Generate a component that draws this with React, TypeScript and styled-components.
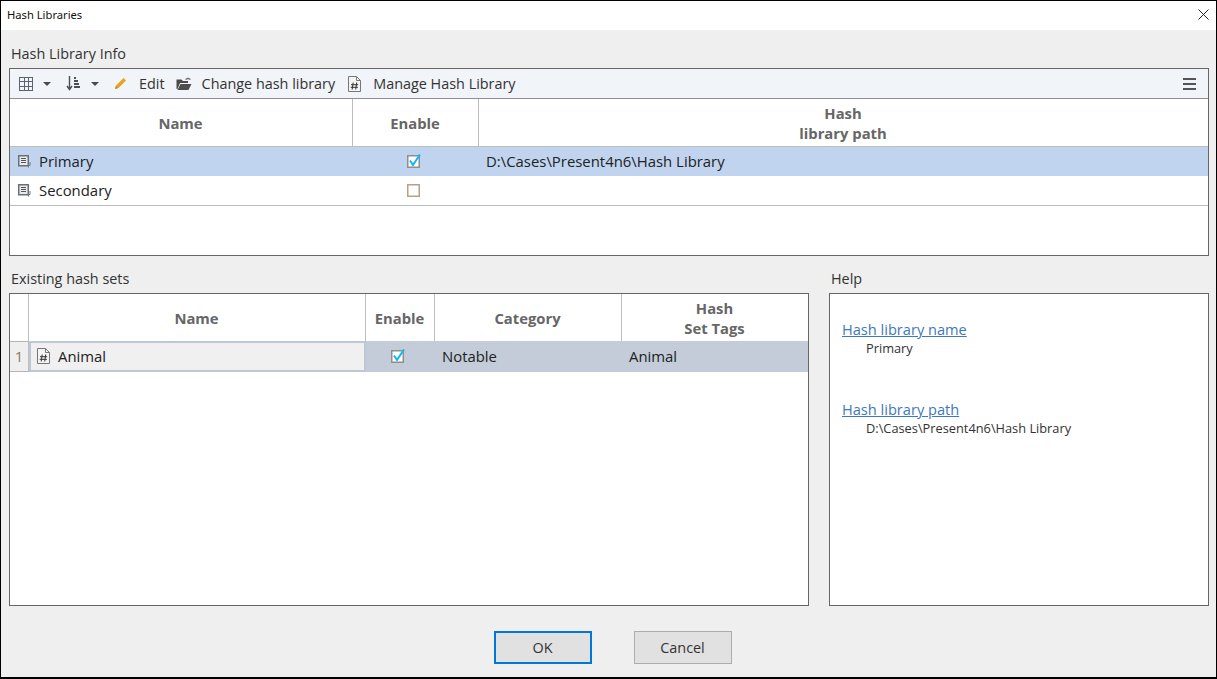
import React from 'react';
import styled, { createGlobalStyle } from 'styled-components';

const Global = createGlobalStyle`
  html, body { margin: 0; padding: 0; background: #efefef; }
  * { box-sizing: border-box; }
`;

const Dialog = styled.div`
  width: 1217px; height: 679px; border: 1px solid #000; border-bottom-width: 2px; background: #efefef;
  display: flex; flex-direction: column; overflow: hidden;
  font-family: "Open Sans", "Noto Sans", sans-serif; color: #222; font-size: 15px;
`;
const TitleBar = styled.div`
  height: 29px; flex: none; background: #fff; display: flex; align-items: center; justify-content: space-between;
  padding: 0 7px 2px 6px; font-size: 11.2px; color: #111;
  font-family: "Noto Sans", "Open Sans", sans-serif;
`;
const Body = styled.div`
  flex: 1; display: flex; flex-direction: column; padding: 14px 7px 0 8px;
`;
const SectionLabel = styled.div`
  height: 24px; line-height: 20px; font-size: 14.4px; color: #333;
  padding-left: 2px;
`;
const Panel = styled.div`
  border: 1px solid #666; background: #fff; display: flex; flex-direction: column; overflow: hidden;
`;
const TopPanel = styled(Panel)` height: 188px; margin-bottom: 13px; `;
const Toolbar = styled.div`
  height: 30px; flex: none; background: #f1f4f8; border-bottom: 1px solid #8f8f8f;
  display: flex; align-items: center; padding: 0 12px 0 9px; color: #333; font-size: 14.4px; position: relative;
`;
const ToolText = styled.span<{ $ml?: number }>`
  margin-left: ${p => p.$ml ?? 0}px; white-space: nowrap;
`;
const ToolGap = styled.span<{ $w: number }>` width: ${p => p.$w}px; flex: none; `;
const Spacer = styled.div` flex: 1; `;
const Row = styled.div<{ $cols: string; $h: number; $bg?: string; $line?: boolean }>`
  display: grid; grid-template-columns: ${p => p.$cols}; height: ${p => p.$h}px; flex: none;
  background: ${p => p.$bg ?? '#fff'};
  ${p => p.$line ? 'border-bottom: 1px solid #bdbdbd;' : ''}
`;
const HeadCell = styled.div<{ $last?: boolean }>`
  display: flex; align-items: center; justify-content: center; text-align: center;
  font-weight: 700; font-size: 14.8px; color: #666; line-height: 20px; padding: 0 1px 0 0;
  ${p => p.$last ? '' : 'border-right: 1px solid #bdbdbd;'}
`;
const Cell = styled.div<{ $pl?: number; $center?: boolean; $shift?: number; $lift?: number }>`
  display: flex; align-items: center; gap: 8px; font-size: 14.9px; color: #222; white-space: nowrap;
  padding-left: ${p => p.$pl ?? 0}px;
  padding-bottom: ${p => p.$lift ?? 1}px;
  ${p => p.$center ? 'justify-content: center;' : ''}
  ${p => p.$shift ? `padding-right: ${p.$shift}px;` : ''}
`;
const NumberCell = styled(Cell)`
  color: #8a7a66; border-right: 1px solid #bdbdbd; justify-content: center; background: #efefef;
  border-top: 1px solid #b5b5b5; border-bottom: 1px solid #b5b5b5;
`;
const NameCell = styled(Cell)`
  background: #f0f0f0; border: 2px solid #bcc8d6; margin: 0;
`;
const Lower = styled.div`
  display: grid; grid-template-columns: 800px 380px; column-gap: 20px;
`;
const LowerPanel = styled(Panel)` height: 313px; `;
const HelpPanel = styled(Panel)` height: 313px; padding: 26px 12px 0; `;
const HelpLink = styled.a`
  display: block; color: #3d78c0; text-decoration: underline; font-size: 14.6px; line-height: 19px; margin-bottom: 1px;
`;
const HelpValue = styled.div<{ $gap: number }>`
  font-size: 12.8px; line-height: 17px; color: #333; padding-left: 24px; margin-bottom: ${p => p.$gap}px;
`;
const Footer = styled.div`
  display: flex; justify-content: center; gap: 42px; margin-top: 25px; padding-left: 7px;
`;
const Btn = styled.button<{ $primary?: boolean }>`
  width: 98px; height: 33px; background: #e1e1e1; font-family: inherit; font-size: 14.4px; color: #333; padding: 0;
  border: ${p => p.$primary ? '2px solid #0078d7' : '1px solid #adadad'};
`;

const GridIcon = () => (
  <svg width="14" height="14" viewBox="0 0 14 14" fill="none" stroke="#5b6270" strokeWidth="1" shapeRendering="crispEdges">
    <rect x=".5" y=".5" width="13" height="13" />
    <path d="M.5 4.5h13M.5 9h13M5 .5v13M9.5 .5v13" />
  </svg>
);
const Caret = ({ ml }: { ml: number }) => (
  <svg width="8" height="4" viewBox="0 0 8 4" style={{ marginLeft: ml }}><path d="M0 0h8L4 4z" fill="#4a4a4a" /></svg>
);
const SortIcon = () => (
  <svg width="15" height="15" viewBox="0 0 15 15" fill="none" stroke="#4a5058" shapeRendering="crispEdges">
    <path d="M3.5 0v12M1 10l2.5 3.5L6 10" strokeWidth="1.4" shapeRendering="auto" />
    <path d="M8 2h2M8 5h4M8 8h5M8 11h6" strokeWidth="1.4" />
  </svg>
);
const PencilIcon = () => (
  <svg width="13" height="13" viewBox="0 0 13 13">
    <path d="M1 12l1-3.5L9.5 1 12 3.5 4.5 11z" fill="#e8a51c" />
    <path d="M1 12l1-3 2 2z" fill="#b58a3a" />
  </svg>
);
const FolderIcon = () => (
  <svg width="16" height="14" viewBox="0 0 16 14">
    <path d="M.5 2.5h5l1.5 1.5h5v2H4L1.5 12H.5z" fill="#4a4a4a" />
    <path d="M4.5 7h11l-3 6H1.5z" fill="#4d4d4d" />
    <path d="M9 2l3-1.5 3 1.5-1 1-2-.8-2 .8z" fill="#777" />
  </svg>
);
const HashFileIcon = () => (
  <svg width="13" height="16" viewBox="0 0 13 16" fill="#f4f4f4" stroke="#777" style={{ flex: 'none' }}>
    <path d="M.5.5h8l4 4v11H.5z" />
    <path d="M8.5.5v4h4" fill="none" />
    <path d="M5.2 6.5l-1 7M8.7 6.5l-1 7M3 8.7h7.2M2.7 11.3h7.2" fill="none" stroke="#333" strokeWidth="1" />
  </svg>
);
const RowIcon = () => (
  <svg width="13" height="13" viewBox="0 0 13 13" fill="none" stroke="#6a7078" style={{ flex: 'none' }}>
    <rect x=".75" y=".75" width="9.5" height="10" fill="#e9ebee" strokeWidth="1.5" />
    <path d="M3 3.5h5M3 5.5h5M3 7.5h5" strokeWidth="1" stroke="#555" />
    <path d="M12 7v3.5h-2M10.5 9v3.5" stroke="#777" strokeWidth="1" />
  </svg>
);
const Check = ({ on }: { on?: boolean }) => (
  <svg width="14" height="14" viewBox="0 0 14 14" fill="none" style={{ flex: 'none' }}>
    <rect x=".75" y="1.75" width="11.5" height="11.5" fill="#fff" stroke={on ? '#8f8f8f' : '#b5a18d'} strokeWidth="1.5" />
    {on && <path d="M3 6.5l3 4.5L13 .5" stroke="#12b5f2" strokeWidth="2" />}
  </svg>
);
const CloseIcon = () => (
  <svg width="11" height="11" viewBox="0 0 11 11" stroke="#222" strokeWidth="1" fill="none"><path d="M.5.5l10 10M10.5.5l-10 10" /></svg>
);
const MenuIcon = () => (
  <svg width="13" height="12" viewBox="0 0 13 12" fill="#555" shapeRendering="crispEdges">
    <rect y="0" width="13" height="2" /><rect y="5" width="13" height="2" /><rect y="10" width="13" height="2" />
  </svg>
);

const topCols = '343px 126px 1fr';
const lowCols = '19px 337px 69px 187px 1fr';

export default function App() {
  return (
    <Dialog>
      <Global />
      <TitleBar>Hash Libraries<CloseIcon /></TitleBar>
      <Body>
        <SectionLabel>Hash Library Info</SectionLabel>
        <TopPanel>
          <Toolbar>
            <GridIcon /><Caret ml={10} />
            <ToolGap $w={15} />
            <SortIcon /><Caret ml={10} />
            <ToolGap $w={15} />
            <PencilIcon /><ToolText $ml={12}>Edit</ToolText>
            <ToolGap $w={11} />
            <FolderIcon /><ToolText $ml={10}>Change hash library</ToolText>
            <ToolGap $w={13} />
            <HashFileIcon /><ToolText $ml={12}>Manage Hash Library</ToolText>
            <Spacer /><MenuIcon />
          </Toolbar>
          <Row $cols={topCols} $h={48} $line>
            <HeadCell>Name</HeadCell><HeadCell>Enable</HeadCell><HeadCell $last>Hash<br />library path</HeadCell>
          </Row>
          <Row $cols={topCols} $h={29} $bg="#c1d4ef">
            <Cell $pl={8}><RowIcon />Primary</Cell><Cell $center $shift={4}><Check on /></Cell><Cell $pl={7}>D:\Cases\Present4n6\Hash Library</Cell>
          </Row>
          <Row $cols={topCols} $h={30} $line>
            <Cell $pl={8}><RowIcon />Secondary</Cell><Cell $center $shift={4}><Check /></Cell><Cell />
          </Row>
        </TopPanel>
        <Lower>
          <div>
            <SectionLabel>Existing hash sets</SectionLabel>
            <LowerPanel>
              <Row $cols={lowCols} $h={47}>
                <HeadCell /><HeadCell>Name</HeadCell><HeadCell>Enable</HeadCell><HeadCell>Category</HeadCell><HeadCell $last>Hash<br />Set Tags</HeadCell>
              </Row>
              <Row $cols={lowCols} $h={31} $bg="#c3ccd8">
                <NumberCell $lift={2}>1</NumberCell>
                <NameCell $pl={6} $lift={1}><HashFileIcon />Animal</NameCell>
                <Cell $center $shift={5} $lift={2}><Check on /></Cell>
                <Cell $pl={7} $lift={2}>Notable</Cell>
                <Cell $pl={7} $lift={2}>Animal</Cell>
              </Row>
            </LowerPanel>
          </div>
          <div>
            <SectionLabel>Help</SectionLabel>
            <HelpPanel>
              <HelpLink>Hash library name</HelpLink>
              <HelpValue $gap={43}>Primary</HelpValue>
              <HelpLink>Hash library path</HelpLink>
              <HelpValue $gap={0}>D:\Cases\Present4n6\Hash Library</HelpValue>
            </HelpPanel>
          </div>
        </Lower>
        <Footer>
          <Btn $primary>OK</Btn>
          <Btn>Cancel</Btn>
        </Footer>
      </Body>
    </Dialog>
  );
}
